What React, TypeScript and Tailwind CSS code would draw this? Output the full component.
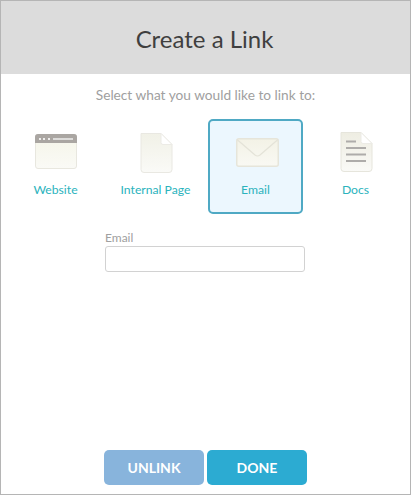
const fontLato = { fontFamily: 'Lato, sans-serif' };

function BrowserIcon() {
  return (
    <svg className="translate-x-[1px] translate-y-[1px]" width="44" height="37" viewBox="0 0 44 37">
      <defs>
        <linearGradient id="bg1" x1="0" y1="0" x2="0" y2="1">
          <stop offset="0" stopColor="#f5f5e8" />
          <stop offset="1" stopColor="#fafaf6" />
        </linearGradient>
      </defs>
      <rect x="0.5" y="0.5" width="41" height="34" rx="2.5" fill="url(#bg1)" stroke="#e8e7df" />
      <path d="M0 3a3 3 0 0 1 3-3h36a3 3 0 0 1 3 3v6H0z" fill="#aaa6a2" />
      <circle cx="5" cy="5" r="1.1" fill="#fff" />
      <circle cx="9" cy="5" r="1.1" fill="#fff" />
      <circle cx="14" cy="5" r="1.1" fill="#fff" />
      <rect x="18" y="4.4" width="20" height="1.2" fill="#fff" />
    </svg>
  );
}

function PageIcon() {
  return (
    <svg className="translate-x-[1px] translate-y-[2px]" width="33" height="41" viewBox="0 0 33 41">
      <defs>
        <linearGradient id="bg2" x1="0" y1="0" x2="0" y2="1">
          <stop offset="0" stopColor="#f1f1e7" />
          <stop offset="1" stopColor="#fafaf7" />
        </linearGradient>
      </defs>
      <path d="M1 0.5h20l11 11v25a3 3 0 0 1-3 3H4a3 3 0 0 1-3-3z" fill="url(#bg2)" stroke="#e9e8e2" />
      <path d="M21 0.5l11 11h-9a2 2 0 0 1-2-2z" fill="#fff" stroke="#ecebe6" />
    </svg>
  );
}

function MailIcon() {
  return (
    <svg className="translate-x-[2px] translate-y-[1px]" width="44" height="30" viewBox="0 0 44 30">
      <defs>
        <linearGradient id="bg3" x1="0" y1="0" x2="0" y2="1">
          <stop offset="0" stopColor="#f3f2e6" />
          <stop offset="1" stopColor="#f9f9f3" />
        </linearGradient>
      </defs>
      <rect x="0.75" y="0.75" width="41.5" height="27.5" rx="2" fill="url(#bg3)" stroke="#e6e5da" strokeWidth="1.5" />
      <path d="M1 1.5l18 15.5a4 4 0 0 0 5 0l18-15.5" fill="none" stroke="#e4e3d8" strokeWidth="1.2" />
    </svg>
  );
}

function DocIcon() {
  return (
    <svg className="translate-x-[1px] translate-y-[1px]" width="33" height="41" viewBox="0 0 33 41">
      <defs>
        <linearGradient id="bg4" x1="0" y1="0" x2="0" y2="1">
          <stop offset="0" stopColor="#eeede2" />
          <stop offset="1" stopColor="#fafaf7" />
        </linearGradient>
      </defs>
      <path d="M1 0.5h20l11 11v25a3 3 0 0 1-3 3H4a3 3 0 0 1-3-3z" fill="url(#bg4)" stroke="#e6e5dc" />
      <path d="M21 0.5l11 11h-9a2 2 0 0 1-2-2z" fill="#fff" stroke="#ecebe6" />
      <rect x="6" y="8.5" width="10" height="2" fill="#aeacaa" />
      <rect x="6" y="15" width="20" height="2" fill="#aeacaa" />
      <rect x="6" y="21.5" width="20" height="2" fill="#aeacaa" />
      <rect x="6" y="28" width="20" height="2" fill="#aeacaa" />
    </svg>
  );
}

const options = [
  { label: 'Website', icon: <BrowserIcon />, active: false },
  { label: 'Internal Page', icon: <PageIcon />, active: false },
  { label: 'Email', icon: <MailIcon />, active: true },
  { label: 'Docs', icon: <DocIcon />, active: false },
];

export default function App() {
  return (
    <div className="w-[411px] h-[495px] flex flex-col bg-white border border-[#b5b5b5] overflow-hidden" style={fontLato}>
      <header className="h-[73px] shrink-0 bg-[#dcdcdc] flex items-center justify-center">
        <h1 className="text-[24px] text-[#3f3f3f] pt-[3px] pr-[2px]">Create a Link</h1>
      </header>

      <p className="mt-[11px] text-center text-[13.7px] leading-[20px] text-[#a0a0a0]">Select what you would like to link to:</p>

      <div className="mt-[14px] flex justify-center gap-[5px]">
        {options.map((o) => (
          <div
            key={o.label}
            className={`w-[95px] h-[95px] flex flex-col items-center rounded-[5px] ${
              o.active ? 'bg-[#ecf7fe] border-2 border-[#4fa9c4]' : 'border-2 border-transparent'
            }`}
          >
            <div className="h-[61px] flex items-center justify-center">{o.icon}</div>
            <span className="text-[12.2px] leading-[16px] text-[#2bb3bd] whitespace-nowrap">{o.label}</span>
          </div>
        ))}
      </div>

      <div className="mt-[17px] ml-[104px] w-[200px]">
        <label className="block mb-[1px] text-[12px] leading-[14px] text-[#a0a0a0]">Email</label>
        <input className="block w-full h-[26px] rounded-[3px] border border-[#d2d2d2] bg-white" />
      </div>

      <div className="mt-auto mb-[9px] flex justify-center gap-[3px]">
        <button className="w-[100px] h-[35px] rounded-[5px] bg-[#88b4dc] text-white text-[14px] font-bold">UNLINK</button>
        <button className="w-[100px] h-[35px] rounded-[5px] bg-[#2cabd2] text-white text-[14px] font-bold">DONE</button>
      </div>
    </div>
  );
}
